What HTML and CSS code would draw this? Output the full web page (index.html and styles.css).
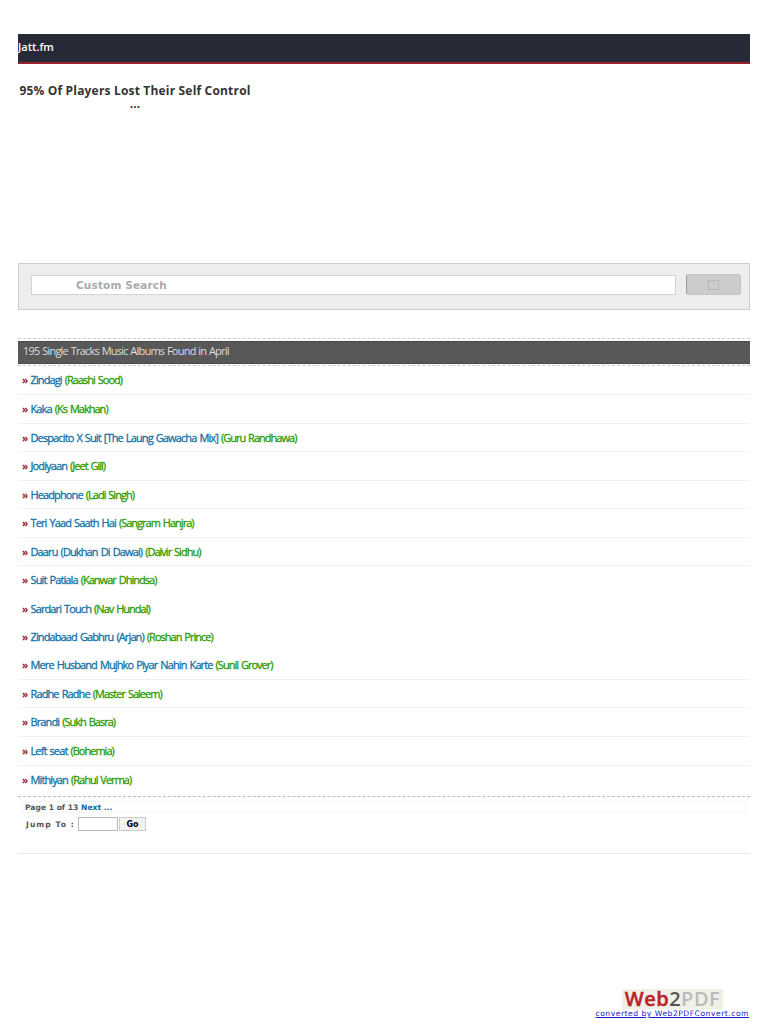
FILE: index.html
```html
<!DOCTYPE html>
<html lang="en">

<head>
  <meta charset="UTF-8" />
  <meta name="viewport" content="width=device-width, initial-scale=1.0" />
  <title>Single Tracks | Jatt.fm</title>
  <link rel="stylesheet" href="styles.css">
</head>

<body>

  <!-- Header -->
  <div class="header">Jatt.fm</div>

  <!-- Ad -->
  <div class="ad">
    <h2>95% Of Players Lost Their Self Control</h2>
    <p>...</p>
  </div>

  <!-- Search -->
  <form class="search">
    <input type="text" placeholder="Custom Search" />
    <button type="button"><span class="search-icon"></span></button>
  </form>

  <!-- Track List -->
  <div class="list-title">
    <h1>195 Single Tracks Music Albums Found in April</h1>
  </div>
  <ul class="tracks">
    <li><i>»</i><a>Zindagi</a> <span>(Raashi Sood)</span></li>
    <li><i>»</i><a>Kaka</a> <span>(Ks Makhan)</span></li>
    <li><i>»</i><a>Despacito X Suit [The Laung Gawacha Mix]</a> <span>(Guru Randhawa)</span></li>
    <li><i>»</i><a>Jodiyaan</a> <span>(Jeet Gill)</span></li>
    <li><i>»</i><a>Headphone</a> <span>(Ladi Singh)</span></li>
    <li><i>»</i><a>Teri Yaad Saath Hai</a> <span>(Sangram Hanjra)</span></li>
    <li><i>»</i><a>Daaru (Dukhan Di Dawai)</a> <span>(Dalvir Sidhu)</span></li>
    <li class="plain"><i>»</i><a>Suit Patiala</a> <span>(Kanwar Dhindsa)</span></li>
    <li class="plain"><i>»</i><a>Sardari Touch</a> <span>(Nav Hundal)</span></li>
    <li class="plain short"><i>»</i><a>Zindabaad Gabhru (Arjan)</a> <span>(Roshan Prince)</span></li>
    <li><i>»</i><a>Mere Husband Mujhko Piyar Nahin Karte</a> <span>(Sunil Grover)</span></li>
    <li><i>»</i><a>Radhe Radhe</a> <span>(Master Saleem)</span></li>
    <li><i>»</i><a>Brandi</a> <span>(Sukh Basra)</span></li>
    <li><i>»</i><a>Left seat</a> <span>(Bohemia)</span></li>
    <li class="plain"><i>»</i><a>Mithiyan</a> <span>(Rahul Verma)</span></li>
  </ul>

  <!-- Paging -->
  <div class="paging">
    <p class="pages">Page 1 of 13 <a>Next ...</a></p>
    <form class="jump">
      <label for="page">Jump To :</label>
      <input type="text" id="page" />
      <button type="button">Go</button>
    </form>
  </div>

  <!-- Footer -->
  <div class="footer">
    <div class="logo"><span class="web">Web</span><span class="two">2</span><span class="pdf">PDF</span></div>
    <a class="credit">converted by Web2PDFConvert.com</a>
  </div>

</body>

</html>
```
FILE: styles.css
```css
* {
  margin: 0;
  padding: 0;
  box-sizing: border-box;
}

body {
  font-family: 'Open Sans', sans-serif;
  background: #fff;
  padding: 34px 18px 0;
  height: 1024px;
  overflow: hidden;
  display: flex;
  flex-direction: column;
}

.header {
  height: 30px;
  background: #262a36;
  border-bottom: 2px solid #98222c;
  color: #fff;
  font-size: 11px;
  font-weight: 600;
  line-height: 26px;
}

.ad {
  width: 234px;
  height: 199px;
  padding: 18px 0 0;
  font-size: 12px;
  font-weight: 700;
  text-align: center;
  color: #333;
  white-space: nowrap;
}

.ad h2 {
  font-size: 12px;
  line-height: 17px;
  letter-spacing: 0.18px;
}

.ad p {
  line-height: 10px;
}

.search {
  height: 47px;
  background: #ededed;
  border: 1px solid #ccc;
  padding: 10px 8px 0 12px;
  display: flex;
  gap: 10px;
}

.search input {
  flex: 1;
  height: 20px;
  margin-top: 1px;
  border: 1px solid #d4d4d4;
  background: #fff;
  padding: 0 0 1px 44px;
  font: bold 10.5px 'DejaVu Sans', sans-serif;
  letter-spacing: 0.15px;
}

.search input::placeholder {
  color: #aaa;
}

.search button {
  width: 55px;
  height: 21px;
  border: 1px solid #c4c4c4;
  border-left-color: #999;
  border-radius: 3px;
  background: #ccc;
  display: flex;
  justify-content: center;
  align-items: center;
}

.search-icon {
  width: 11px;
  height: 10px;
  border: 1px solid #b8b8b8;
}

.list-title {
  margin-top: 28px;
  padding: 2px 0 1px;
  border-top: 1px dashed #ccc;
  border-bottom: 1px dashed #ccc;
}

.list-title h1 {
  height: 23px;
  padding-left: 5px;
  background: #585858;
  border-top: 1px solid #484848;
  border-bottom: 1px solid #484848;
  color: #ddd;
  font-size: 11px;
  font-weight: 400;
  line-height: 18px;
  letter-spacing: -0.78px;
  word-spacing: 0.6px;
}

.tracks {
  list-style: none;
  font-size: 11px;
  letter-spacing: -0.88px;
  word-spacing: 1px;
}

.tracks li {
  height: 28.55px;
  padding-left: 4px;
  border-bottom: 1px solid #f0f0f0;
  line-height: 27px;
  white-space: nowrap;
}

.tracks li:first-child {
  height: 29px;
}

.tracks li.plain {
  border-bottom-color: transparent;
}

.tracks li.short {
  height: 28px;
}

.tracks i {
  display: inline-block;
  width: 8.5px;
  font: bold 10px/10px 'Open Sans', sans-serif;
  letter-spacing: 0;
  color: #a32020;
}

.tracks a {
  color: #1272a6;
  -webkit-text-stroke: 0.3px #1272a6;
}

.tracks span {
  color: #2c9a00;
  letter-spacing: -0.98px;
  -webkit-text-stroke: 0.3px #2c9a00;
}

.paging {
  height: 58px;
  margin-top: 2px;
  padding: 4px 4px 0;
  border-top: 1px dashed #bbb;
  border-bottom: 1px solid #e6e6e6;
  font: bold 7.6px 'DejaVu Sans', sans-serif;
  color: #555;
}

.pages {
  height: 12px;
  padding-left: 2px;
  border: 1px dotted #eee;
  line-height: 11px;
}

.pages a {
  color: #0a689c;
}

.jump {
  display: flex;
  align-items: center;
  margin-top: 4px;
  padding-left: 4px;
}

.jump label {
  width: 52px;
  letter-spacing: 1.05px;
  white-space: nowrap;
}

.jump input {
  width: 40px;
  height: 14px;
  border: 1px solid #bbb;
}

.jump button {
  width: 27px;
  height: 14px;
  margin-left: 1px;
  border: 1px solid #ccc;
  background: #f2f2f2;
  font: bold 8px 'DejaVu Sans', sans-serif;
  color: #000;
}

.footer {
  margin-top: auto;
  padding-bottom: 5px;
  display: flex;
  flex-direction: column;
  align-items: flex-end;
}

.logo {
  width: 101px;
  height: 20px;
  margin-right: 27px;
  background: #f1f0e6;
  font-size: 20px;
  font-weight: 600;
  line-height: 20px;
  letter-spacing: 0.5px;
  text-align: center;
  white-space: nowrap;
}

.web {
  color: #b8242a;
  -webkit-text-stroke: 0.4px #b8242a;
}

.two {
  color: #555;
}

.pdf {
  color: #bbb;
}

.credit {
  margin-right: 1px;
  font: 7.6px/10px 'DejaVu Sans', sans-serif;
  letter-spacing: 0.52px;
  color: #1a1acc;
  text-decoration: underline;
  white-space: nowrap;
}
```
